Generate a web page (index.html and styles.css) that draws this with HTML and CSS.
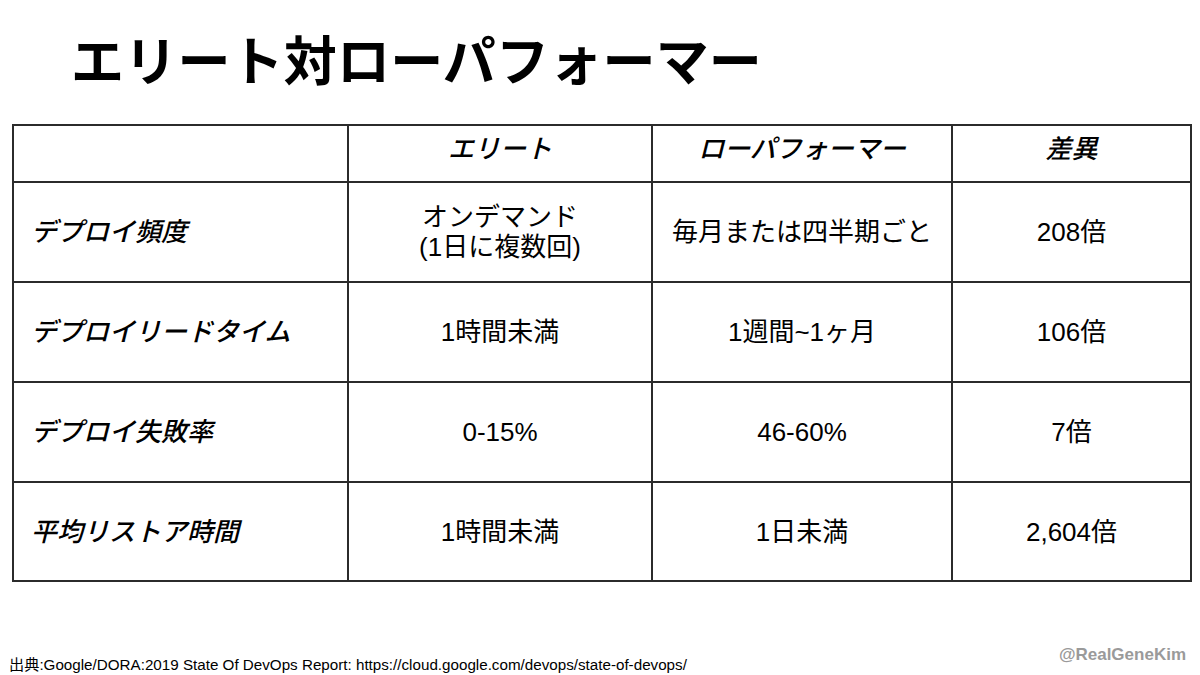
FILE: index.html
```html
<!DOCTYPE html>
<html lang="ja">
<head>
<meta charset="utf-8">
<link rel="stylesheet" href="styles.css">
</head>
<body>
<div class="slide">
  <h1 class="title">エリート対ローパフォーマー</h1>
  <table class="grid">
    <colgroup>
      <col class="c1"><col class="c2"><col class="c3"><col class="c4">
    </colgroup>
    <thead>
      <tr class="head">
        <th></th>
        <th>エリート</th>
        <th>ローパフォーマー</th>
        <th>差異</th>
      </tr>
    </thead>
    <tbody>
      <tr>
        <th class="label">デプロイ頻度</th>
        <td class="two">オンデマンド<br>(1日に複数回)</td>
        <td>毎月または四半期ごと</td>
        <td>208倍</td>
      </tr>
      <tr>
        <th class="label">デプロイリードタイム</th>
        <td>1時間未満</td>
        <td>1週間~1ヶ月</td>
        <td>106倍</td>
      </tr>
      <tr>
        <th class="label">デプロイ失敗率</th>
        <td>0-15%</td>
        <td>46-60%</td>
        <td>7倍</td>
      </tr>
      <tr class="last">
        <th class="label">平均リストア時間</th>
        <td>1時間未満</td>
        <td>1日未満</td>
        <td>2,604倍</td>
      </tr>
    </tbody>
  </table>
  <div class="footer">
    <div class="source">出典:Google/DORA:2019 State Of DevOps Report: https://cloud.google.com/devops/state-of-devops/</div>
    <div class="handle">@RealGeneKim</div>
  </div>
</div>
</body>
</html>
```

FILE: styles.css
```css
html, body {
  margin: 0;
  padding: 0;
  background: #ffffff;
}

.slide {
  width: 1200px;
  height: 675px;
  overflow: hidden;
  font-family: "Liberation Sans", "Noto Sans CJK JP", sans-serif;
  color: #000;
}

.title {
  margin: 0;
  padding: 32px 0 0 71px;
  height: 53px;
  font-size: 53px;
  line-height: 53px;
  font-weight: 700;
  font-family: "Noto Sans CJK JP", sans-serif;
  letter-spacing: 0.2px;
}

.grid {
  margin: 39px 0 0 12px;
  width: 1178px;
  table-layout: fixed;
  border-collapse: collapse;
  font-size: 26px;
}

.c1 { width: 335px; }
.c2 { width: 304px; }
.c3 { width: 300px; }
.c4 { width: 239px; }

.grid th,
.grid td {
  border: 2px solid #2b2b2b;
  padding: 0;
  text-align: center;
  vertical-align: middle;
  height: 98px;
  line-height: 30px;
}

.grid .head th {
  height: 45px;
  padding-bottom: 10px;
  font-weight: 500;
  font-style: italic;
}

.grid .label {
  text-align: left;
  padding-left: 17px;
  font-weight: 500;
  font-style: italic;
}

.grid td {
  font-weight: 400;
}

.grid .last th,
.grid .last td {
  height: 97px;
}

.footer {
  display: flex;
  justify-content: space-between;
  align-items: flex-start;
  margin-top: 63px;
  padding: 0 14px 0 9px;
}

.source {
  font-size: 15.2px;
  padding-top: 7px;
  color: #000;
}

.handle {
  font-size: 17px;
  font-weight: 700;
  color: #9a9a9a;
}
```
